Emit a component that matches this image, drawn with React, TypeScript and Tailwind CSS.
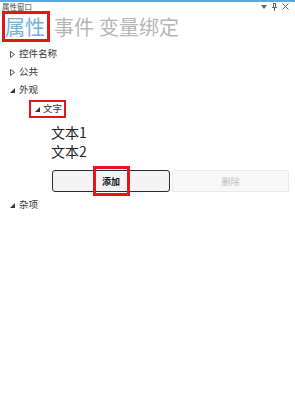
import React from "react";

const font = { fontFamily: '"Noto Sans CJK SC", "Noto Sans", sans-serif' };

function Collapsed() {
  return (
    <svg width="5" height="7" viewBox="0 0 5 7" className="shrink-0">
      <polygon points="0.5,0.5 4.5,3.5 0.5,6.5" fill="none" stroke="#555" strokeWidth="1" />
    </svg>
  );
}

function Expanded() {
  return (
    <svg width="5" height="5" viewBox="0 0 5 5" className="shrink-0">
      <polygon points="5,0 5,5 0,5" fill="#333" />
    </svg>
  );
}

function TreeRow({ label, open }: { label: string; open?: boolean }) {
  return (
    <div className="flex h-[18px] items-center pl-[10px] gap-[4px]">
      {open ? <Expanded /> : <Collapsed />}
      <span className="text-[9.5px] leading-none text-[#333]">{label}</span>
    </div>
  );
}

export default function App() {
  return (
    <div className="w-[295px] h-[395px] bg-white overflow-hidden" style={font}>
      <div className="h-[2px] bg-[#5ba9dc]" />

      {/* window title */}
      <div className="flex h-[9px] items-center justify-between pl-[2px] pr-[6px]">
        <span className="text-[7.5px] leading-none text-[#444]">属性窗口</span>
        <div className="flex items-center gap-[5px] text-[#666]">
          <svg width="6" height="4" viewBox="0 0 6 4">
            <polygon points="0,0 6,0 3,4" fill="#666" />
          </svg>
          <svg width="5" height="8" viewBox="0 0 5 8">
            <path d="M1 0.5h3M1.5 0.5v4M3.5 0.5v4M0 4.5h5M2.5 4.5v3.5" stroke="#666" strokeWidth="1" fill="none" />
          </svg>
          <svg width="7" height="7" viewBox="0 0 7 7">
            <path d="M0.5 0.5l6 6M6.5 0.5l-6 6" stroke="#666" strokeWidth="1" />
          </svg>
        </div>
      </div>

      {/* tabs */}
      <div className="flex items-center text-[20px] leading-[25px]">
        <span className="ml-[2px] border-[3px] border-[#e3161b] pr-[2px] text-[#6cb2e0]">属性</span>
        <span className="ml-[4px] text-[#b5b5b5]">事件</span>
        <span className="ml-[5px] text-[#b5b5b5]">变量绑定</span>
      </div>

      <div className="mt-[3px] flex flex-col">
        <TreeRow label="控件名称" />
        <TreeRow label="公共" />
        <TreeRow label="外观" open />

        <div className="flex h-[20px] items-center pl-[29px]">
          <div className="flex h-[18px] items-center gap-[3px] border-2 border-[#e3161b] pl-[4px] pr-[2px]">
            <Expanded />
            <span className="text-[9.5px] leading-none text-[#333]">文字</span>
          </div>
        </div>

        <div className="mt-[3px] flex flex-col pl-[51px] text-[14px] text-[#222]">
          <div className="flex h-[19px] items-center leading-none">文本1</div>
          <div className="flex h-[19px] items-center leading-none">文本2</div>
        </div>

        <div className="mt-[10px] flex gap-[2px] pl-[52px] pr-[6px]">
          <button className="relative flex h-[22px] w-[118px] items-center justify-center rounded-[3px] border-[1.5px] border-[#2a2a2a] bg-[#f4f4f4] text-[9px] font-bold leading-none text-[#111]">
            添加
            <span className="absolute left-[40px] top-[-5px] h-[30px] w-[37px] border-[3px] border-[#e3161b]" />
          </button>
          <button className="flex h-[22px] flex-1 items-center justify-center rounded-[2px] border border-[#e9e9e9] bg-[#f8f8f8] text-[9px] leading-none text-[#bdbdbd]">
            删除
          </button>
        </div>

        <div className="mt-[4px]">
          <TreeRow label="杂项" open />
        </div>
      </div>
    </div>
  );
}
